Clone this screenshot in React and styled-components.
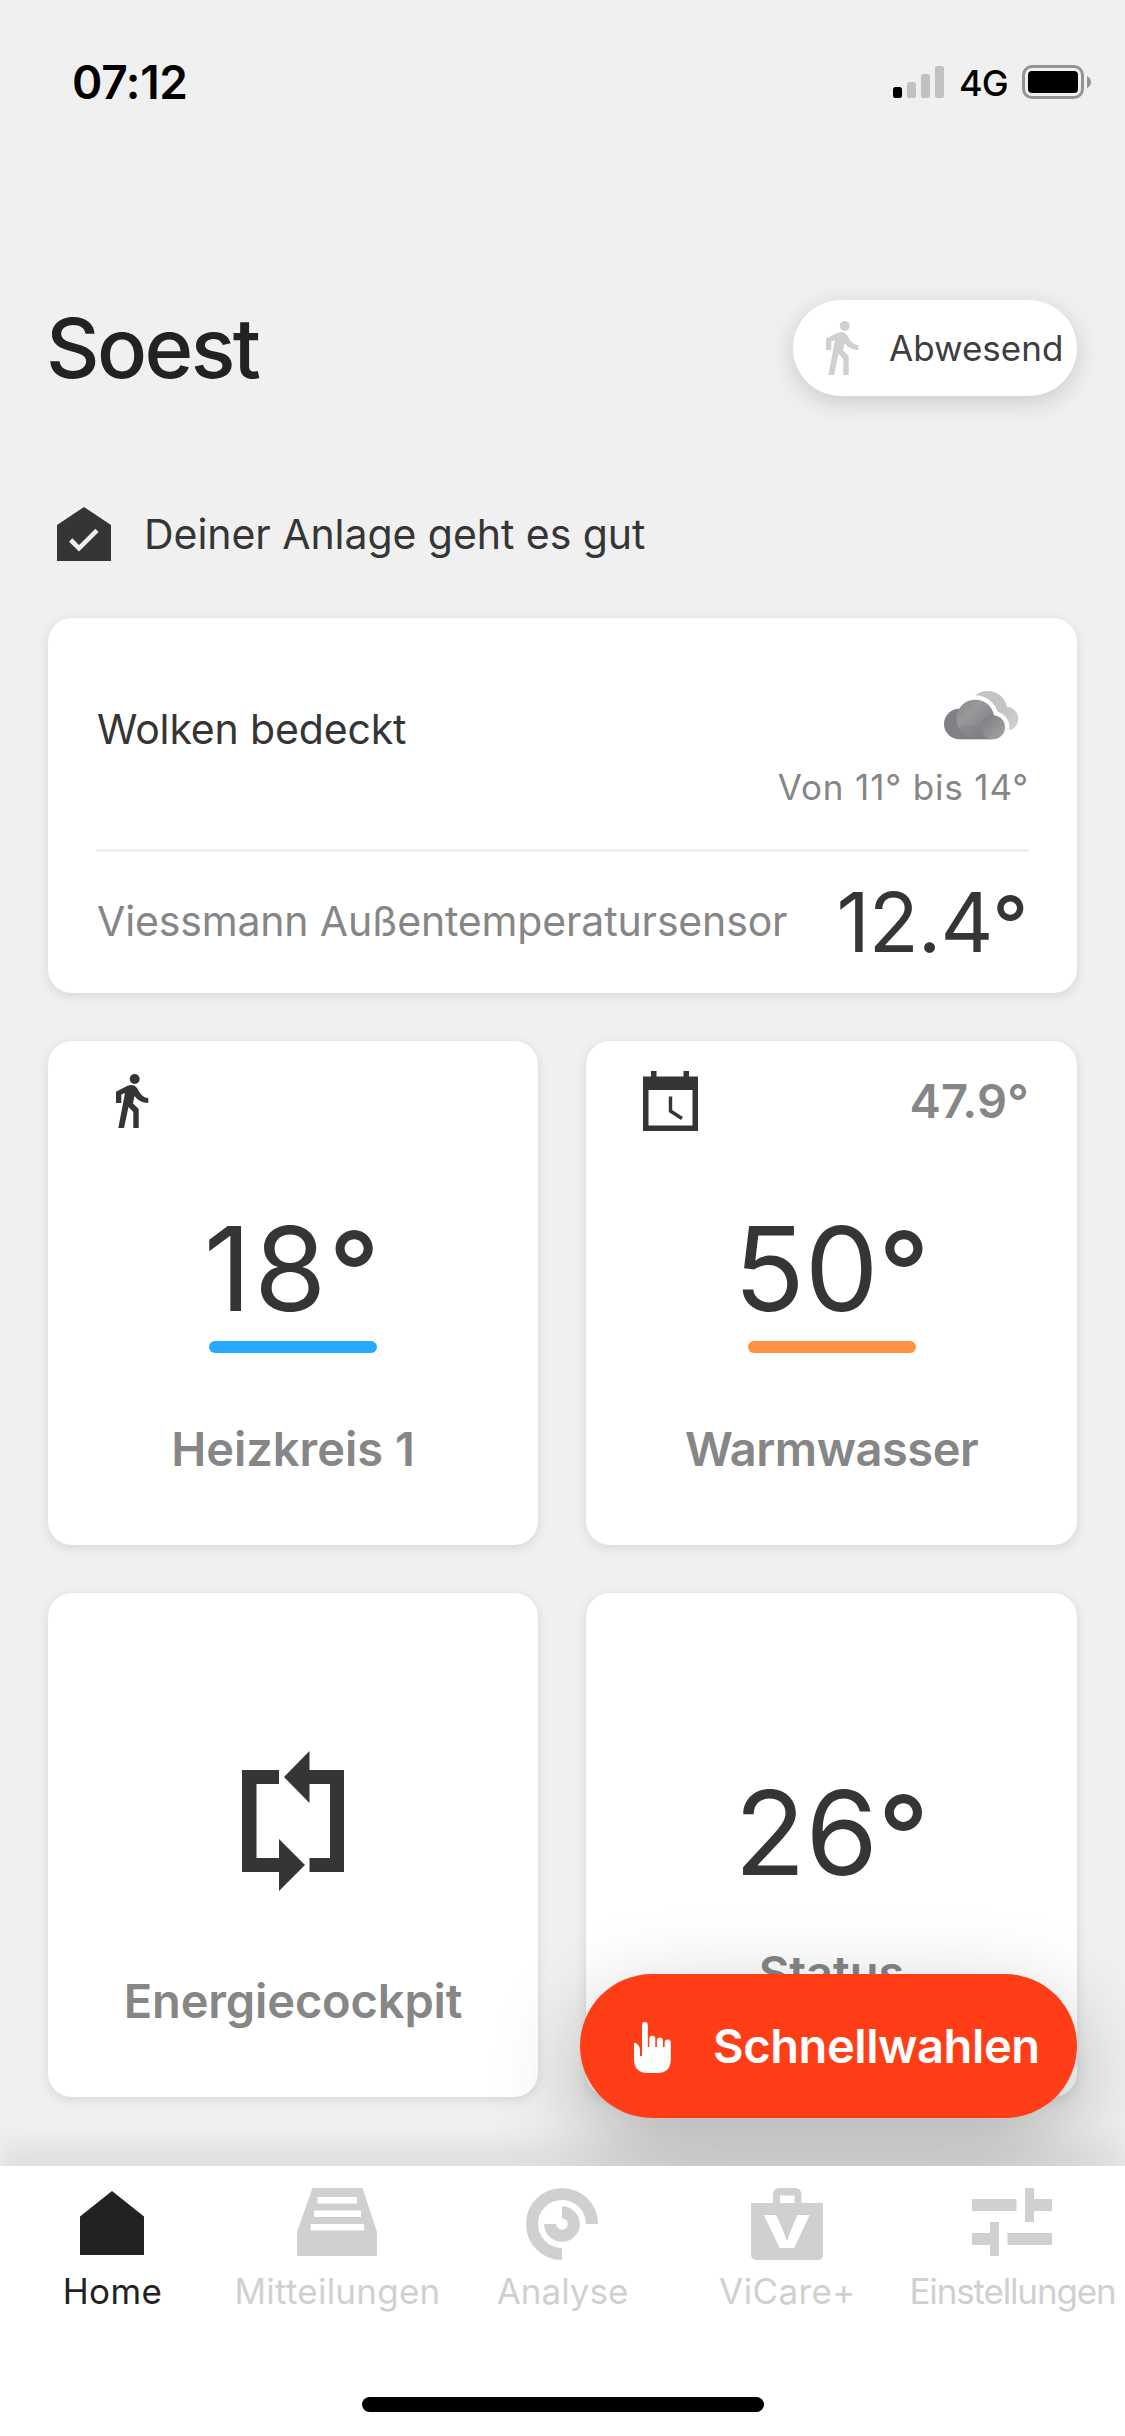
import styled, { createGlobalStyle } from "styled-components";

const WalkIcon = ({ color }) => (
  <svg width="33" height="54" viewBox="0 0 33 54" fill={color}>
    <circle cx="18.7" cy="5" r="5" />
    <path d="M0 17.7L11 12Q18 9.5 21 14L24 19Q27.5 24 32.3 24V29Q23 28.5 18.5 22L17 29.5L22.7 35V54H17.3V38L12.5 33L8 54H2.3L9 19L5.3 20.5V29H0Z" />
  </svg>
);

const HouseCheckIcon = () => (
  <svg width="54" height="54" viewBox="0 0 54 54">
    <path d="M27 0L54 18V54H0V18Z" fill="#353535" />
    <path d="M13.7 33L22 41.3L40 23.3" fill="none" stroke="#f0f0f0" strokeWidth="4.6" />
  </svg>
);

const CloudIcon = () => (
  <svg width="75" height="49" viewBox="72 62 225 147">
    <defs>
      <linearGradient id="cloudMain" x1="0.1" y1="0.1" x2="0.8" y2="0.8">
        <stop offset="0" stopColor="#8b8c8e" />
        <stop offset="0.35" stopColor="#989a9a" />
        <stop offset="1" stopColor="#808186" />
      </linearGradient>
      <linearGradient id="cloudSmall" x1="0.2" y1="0.1" x2="0.8" y2="0.8">
        <stop offset="0" stopColor="#808186" />
        <stop offset="1" stopColor="#9c9d9d" />
      </linearGradient>
      <linearGradient id="cloudBack" x1="0" y1="0" x2="1" y2="1">
        <stop offset="0" stopColor="#bebebe" />
        <stop offset="1" stopColor="#d2d2d2" />
      </linearGradient>
    </defs>
    <circle cx="203" cy="121" r="59" fill="#c4c4c4" />
    <circle cx="260" cy="145" r="35" fill="url(#cloudBack)" />
    <g fill="#fff">
      <circle cx="118" cy="161" r="59" />
      <circle cx="166" cy="145" r="70" />
      <circle cx="219" cy="171" r="49" />
    </g>
    <path d="M118 115H150V150H219V207H118A46 46 0 0 1 118 115Z" fill="#808186" />
    <circle cx="166" cy="145" r="57" fill="url(#cloudMain)" />
    <path d="M118 165H219V207H118Z" fill="#808186" opacity="0.45" />
    <circle cx="219" cy="171" r="36" fill="url(#cloudSmall)" />
  </svg>
);

const CalendarIcon = () => (
  <svg width="55" height="60" viewBox="0 0 55 60">
    <path
      fillRule="evenodd"
      d="M8 0H13.5V5.5H40.5V0H46V5.5H55V60H0V5.5H8ZM5.5 19V54.5H49.5V19Z"
      fill="#353535"
    />
    <path d="M27.5 25.5V40L39 47.5" fill="none" stroke="#353535" strokeWidth="3.4" />
  </svg>
);

const CycleIcon = () => (
  <svg width="102" height="140" viewBox="0 0 102 140" fill="#353535">
    <path d="M0 19H37V33H14.5V107H37V88L63 114L37 140V121H0Z" />
    <path d="M102 19H67.5V0L42 26L67.5 52V33H88V107H67.5V121H102Z" />
  </svg>
);

const HandIcon = () => (
  <svg width="37" height="51" viewBox="0 0 37 51" fill="#fff">
    <path d="M0 22Q0 20.2 1.6 21Q6 23.4 6 28V34H8V3A2.9 2.9 0 0 1 13.8 3V25H15.3V17A3 3 0 0 1 21.3 16.5V25H22.9V18.5A3 3 0 0 1 28.9 18.5V25H30.6V20.6A3 3 0 0 1 36.8 20.6V37Q36.8 51 23 51H14Q0 51 0 37Z" />
  </svg>
);

const HomeIcon = () => (
  <svg width="64" height="64" viewBox="0 0 64 64">
    <path d="M32 0L64 25.5V64H0V25.5Z" fill="currentColor" />
  </svg>
);

const InboxIcon = () => (
  <svg width="80" height="68" viewBox="0 0 80 68" fill="currentColor">
    <path
      fillRule="evenodd"
      d="M15.5 0H65.5L80 44V68H0V44ZM20.5 9V15.5H60V9ZM17 22.5V29H64V22.5ZM13.7 36V42.5H67V36Z"
    />
  </svg>
);

const AnalyseIcon = () => (
  <svg width="72" height="72" viewBox="0 0 72 72" fill="none" stroke="currentColor" strokeWidth="12">
    <path d="M66 36A30 30 0 1 0 36 66" />
    <path d="M36 24.2A11.8 11.8 0 1 1 24.2 36" />
  </svg>
);

const BagIcon = () => (
  <svg width="72" height="72" viewBox="0 0 72 72">
    <path
      fillRule="evenodd"
      d="M22 15V7Q22 0 29 0H43.5Q50.5 0 50.5 7V15H72V66Q72 72 66 72H6Q0 72 0 66V15ZM29 7.5V15H43.5V7.5Z"
      fill="currentColor"
    />
    <BagLetter x="11.5" y="60" textLength="48.5" lengthAdjust="spacingAndGlyphs">
      V
    </BagLetter>
  </svg>
);

const SlidersIcon = () => (
  <svg width="80" height="68" viewBox="0 0 80 68" fill="currentColor">
    <path d="M0 11H44.5V23H0ZM53 0H62V11H80V23H62V34H53ZM0 45H18V34H27V68H18V57H0ZM35.5 45H80V57H35.5Z" />
  </svg>
);

const tabs = [
  { label: "Home", icon: <HomeIcon />, active: true, spacing: 0.4 },
  { label: "Mitteilungen", icon: <InboxIcon />, spacing: 0.25 },
  { label: "Analyse", icon: <AnalyseIcon />, spacing: 0 },
  { label: "ViCare+", icon: <BagIcon />, spacing: 0.4 },
  { label: "Einstellungen", icon: <SlidersIcon />, spacing: -1.15 },
];

const StatusBar = () => (
  <StatusRow>
    <Clock>07:12</Clock>
    <StatusRight>
      <svg width="51" height="32" viewBox="0 0 51 32" fill="#c1c1c1">
        <rect x="0" y="21" width="9" height="11" rx="2.5" fill="#000" />
        <rect x="14" y="16" width="9" height="16" rx="2.5" />
        <rect x="28" y="8" width="9" height="24" rx="2.5" />
        <rect x="42" y="0" width="9" height="32" rx="2.5" />
      </svg>
      <Network>4G</Network>
      <svg width="69" height="34" viewBox="0 0 69 34">
        <rect x="1.5" y="1.5" width="59" height="31" rx="8.5" fill="none" stroke="#939393" strokeWidth="3" />
        <rect x="6" y="6" width="50" height="22" rx="4" fill="#000" />
        <path d="M65 11Q69 13 69 17Q69 21 65 23Z" fill="#939393" />
      </svg>
    </StatusRight>
  </StatusRow>
);

const App = () => {
  return (
    <>
      <GlobalStyle />
      <Screen>
        <StatusBar />
        <Header>
          <Title>Soest</Title>
          <AwayButton>
            <WalkIcon color="#d0d0d0" />
            <span>Abwesend</span>
          </AwayButton>
        </Header>
        <SystemState>
          <HouseCheckIcon />
          <span>Deiner Anlage geht es gut</span>
        </SystemState>
        <WeatherCard>
          <Forecast>
            <Condition>Wolken bedeckt</Condition>
            <ForecastRight>
              <CloudIcon />
              <Range>Von 11° bis 14°</Range>
            </ForecastRight>
          </Forecast>
          <Sensor>
            <SensorName>Viessmann Außentemperatursensor</SensorName>
            <SensorValue>
              12.4<Degree>°</Degree>
            </SensorValue>
          </Sensor>
        </WeatherCard>
        <Tiles>
          <Tile>
            <TileTop>
              <IconSlot>
                <WalkIcon color="#353535" />
              </IconSlot>
            </TileTop>
            <Value $spacing={2.5}>
              18<Degree>°</Degree>
            </Value>
            <Bar $color="#26a9ff" />
            <TileLabel>Heizkreis 1</TileLabel>
          </Tile>
          <Tile>
            <TileTop>
              <IconSlot>
                <CalendarIcon />
              </IconSlot>
              <Current>47.9°</Current>
            </TileTop>
            <Value>
              50<Degree>°</Degree>
            </Value>
            <Bar $color="#ff9142" />
            <TileLabel $spacing={-0.5}>Warmwasser</TileLabel>
          </Tile>
          <Tile>
            <CycleSlot>
              <CycleIcon />
            </CycleSlot>
            <TileLabel $spacing={-0.15}>Energiecockpit</TileLabel>
          </Tile>
          <Tile>
            <Value $top={168}>
              26<Degree>°</Degree>
            </Value>
            <TileLabel $top={38}>Status</TileLabel>
          </Tile>
        </Tiles>
        <QuickButton>
          <HandIcon />
          <QuickText>Schnellwahlen</QuickText>
        </QuickButton>
        <TabBar>
          <TabRow>
            {tabs.map((tab) => (
              <Tab key={tab.label} $active={tab.active}>
                <TabIcon>{tab.icon}</TabIcon>
                <TabLabel $spacing={tab.spacing}>{tab.label}</TabLabel>
              </Tab>
            ))}
          </TabRow>
          <HomeIndicator />
        </TabBar>
      </Screen>
    </>
  );
};

export default App;

const GlobalStyle = createGlobalStyle`
  * {
    box-sizing: border-box;
  }
  body {
    margin: 0;
    background: #f0f0f0;
    font-family: Inter, "Liberation Sans", sans-serif;
    -webkit-font-smoothing: antialiased;
  }
  svg {
    display: block;
    flex-shrink: 0;
  }
  button {
    font-family: inherit;
    border: none;
  }
`;

const Screen = styled.div`
  position: relative;
  display: flex;
  flex-direction: column;
  width: 1125px;
  height: 2436px;
  overflow: hidden;
  background: #f0f0f0;
  color: #353535;
  white-space: nowrap;
`;

const StatusRow = styled.div`
  display: flex;
  align-items: center;
  justify-content: space-between;
  height: 164px;
  padding: 0 34px 0 72px;
`;

const Clock = styled.div`
  font-size: 46px;
  font-weight: 600;
  letter-spacing: -0.3px;
  color: #000;
`;

const StatusRight = styled.div`
  display: flex;
  align-items: center;
`;

const Network = styled.div`
  width: 78px;
  padding: 2px 0 0 15px;
  font-size: 36px;
  font-weight: 500;
  letter-spacing: -1px;
  color: #000;
`;

const Header = styled.header`
  display: flex;
  align-items: center;
  justify-content: space-between;
  height: 96px;
  margin-top: 136px;
  padding: 0 48px 0 46px;
`;

const Title = styled.h1`
  margin: 0;
  font-size: 83px;
  font-weight: 500;
  letter-spacing: -2.6px;
  color: #222;
`;

const AwayButton = styled.button`
  display: flex;
  align-items: center;
  gap: 30px;
  width: 284px;
  height: 96px;
  padding: 0 0 0 33px;
  border-radius: 48px;
  background: #fff;
  box-shadow: 0 6px 24px rgba(0, 0, 0, 0.16);
  font-size: 35px;
  color: #3e3e3e;
`;

const SystemState = styled.div`
  display: flex;
  align-items: center;
  gap: 33px;
  height: 54px;
  margin-top: 111px;
  padding: 0 57px;
  font-size: 41px;
  letter-spacing: -0.05px;
`;

const Card = styled.section`
  border-radius: 24px;
  background: #fff;
  box-shadow: 0 3px 12px rgba(0, 0, 0, 0.11);
`;

const WeatherCard = styled(Card)`
  margin: 57px 48px 0;
  padding: 0 48px;
`;

const Forecast = styled.div`
  display: flex;
  justify-content: space-between;
  height: 234px;
  border-bottom: 3px solid #f0f0f0;
`;

const Condition = styled.div`
  padding: 81px 0 0 1px;
  font-size: 41px;
  line-height: 60px;
  letter-spacing: -0.15px;
`;

const ForecastRight = styled.div`
  display: flex;
  flex-direction: column;
  align-items: flex-end;
  padding-top: 73px;

  svg {
    margin-right: 10px;
  }
`;

const Range = styled.div`
  margin-top: 22px;
  font-size: 35px;
  line-height: 50px;
  letter-spacing: 0.85px;
  color: #868686;
`;

const Sensor = styled.div`
  display: flex;
  align-items: center;
  justify-content: space-between;
  height: 141px;
`;

const SensorName = styled.div`
  padding: 0 0 3px 1px;
  font-size: 41px;
  letter-spacing: -0.15px;
  color: #868686;
`;

const SensorValue = styled.div`
  padding-right: 2px;
  font-size: 82px;
  letter-spacing: -1px;
`;

/* the ring is a touch smaller and heavier than the digits */
const Degree = styled.span`
  font-size: 0.95em;
  font-weight: 500;
  line-height: 1;
`;

const Tiles = styled.main`
  display: grid;
  grid-template-columns: 490px 491px;
  grid-auto-rows: 504px;
  justify-content: space-between;
  row-gap: 48px;
  margin-top: 48px;
  padding: 0 48px;
`;

const Tile = styled(Card)`
  display: flex;
  flex-direction: column;
  align-items: center;
`;

const TileTop = styled.div`
  display: flex;
  align-items: center;
  justify-content: space-between;
  width: 100%;
  height: 120px;
  padding: 0 48px;
`;

const IconSlot = styled.div`
  display: flex;
  justify-content: center;
  width: 72px;
`;

const Current = styled.div`
  padding-bottom: 2px;
  font-size: 47px;
  font-weight: 600;
  letter-spacing: 0.2px;
  color: #868686;
`;

const Value = styled.div`
  height: 144px;
  margin-top: ${({ $top }) => $top || 36}px;
  font-size: 117px;
  line-height: 144px;
  letter-spacing: ${({ $spacing }) => $spacing || 0}px;
`;

const Bar = styled.div`
  width: 168px;
  height: 12px;
  border-radius: 6px;
  background: ${({ $color }) => $color};
`;

const TileLabel = styled.div`
  margin-top: ${({ $top }) => $top || 66}px;
  font-size: 47px;
  font-weight: 600;
  line-height: 60px;
  letter-spacing: ${({ $spacing }) => $spacing || 0}px;
  color: #868686;
`;

const CycleSlot = styled.div`
  height: 312px;
  padding-top: 158px;
`;

const QuickButton = styled.button`
  position: absolute;
  top: 1974px;
  right: 48px;
  display: flex;
  align-items: center;
  gap: 42px;
  width: 497px;
  height: 144px;
  padding: 2px 0 0 54px;
  border-radius: 72px;
  background: #ff3e17;
  box-shadow: 0 30px 90px rgba(0, 0, 0, 0.27);
  font-size: 47px;
  font-weight: 600;
  color: #fff;
`;

const QuickText = styled.span`
  padding-bottom: 4px;
  letter-spacing: -0.4px;
`;

const TabBar = styled.nav`
  position: relative;
  height: 270px;
  margin-top: auto;
  background: #fff;
  box-shadow: 0 -22px 26px rgba(0, 0, 0, 0.07);
`;

const TabRow = styled.div`
  display: grid;
  grid-template-columns: repeat(5, 225px);
  height: 231px;
`;

const Tab = styled.div`
  display: flex;
  flex-direction: column;
  align-items: center;
  padding-top: 22px;
  color: ${({ $active }) => ($active ? "#222" : "#d0d0d0")};
`;

const TabIcon = styled.div`
  display: flex;
  align-items: flex-start;
  height: 78px;
  padding-right: 1px;

  ${Tab}:first-child & {
    padding-top: 3px;
  }
`;

const TabLabel = styled.div`
  font-size: 35px;
  line-height: 50px;
  letter-spacing: ${({ $spacing }) => $spacing}px;
`;

const HomeIndicator = styled.div`
  width: 402px;
  height: 15px;
  margin: 0 auto;
  border-radius: 8px;
  background: #000;
`;

const BagLetter = styled.text`
  font-size: 45px;
  font-weight: 800;
  fill: #fff;
`;
